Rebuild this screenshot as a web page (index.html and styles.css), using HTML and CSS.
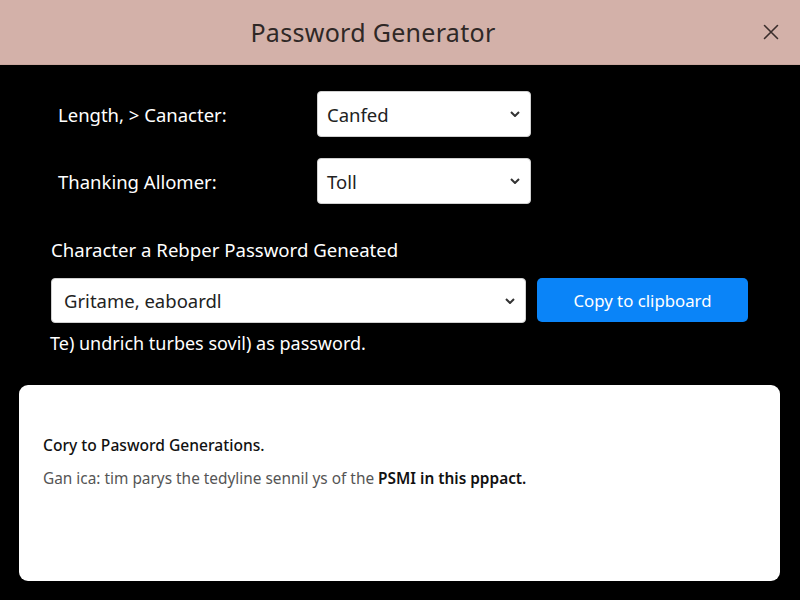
FILE: index.html
```html
<!DOCTYPE html>
<html>
<head>
<meta charset="utf-8">
<link rel="stylesheet" href="styles.css">
</head>
<body>
<header class="titlebar">
  <h1 class="title">Password Generator</h1>
  <button class="close" aria-label="Close">
    <svg width="16" height="16" viewBox="0 0 16 16"><path d="M1.5 1.5 L14.5 14.5 M14.5 1.5 L1.5 14.5" stroke="#3a2e2c" stroke-width="1.6" fill="none" stroke-linecap="round"/></svg>
  </button>
</header>
<main class="content">
  <div class="options">
    <div class="row">
      <label class="label">Length, &gt; Canacter:</label>
      <div class="select"><span>Canfed</span><svg class="chev" width="10" height="6" viewBox="0 0 10 6"><path d="M1 1 L5 5 L9 1" stroke="#333" stroke-width="2" fill="none"/></svg></div>
    </div>
    <div class="row">
      <label class="label">Thanking Allomer:</label>
      <div class="select"><span>Toll</span><svg class="chev" width="10" height="6" viewBox="0 0 10 6"><path d="M1 1 L5 5 L9 1" stroke="#333" stroke-width="2" fill="none"/></svg></div>
    </div>
  </div>
  <h2 class="section-title">Character a Rebper Password Geneated</h2>
  <div class="gen-row">
    <div class="select wide"><span>Gritame, eaboardl</span><svg class="chev" width="10" height="6" viewBox="0 0 10 6"><path d="M1 1 L5 5 L9 1" stroke="#333" stroke-width="2" fill="none"/></svg></div>
    <button class="copy">Copy to clipboard</button>
  </div>
  <p class="hint">Te) undrich turbes sovil) as password.</p>
  <section class="card">
    <h3 class="card-title">Cory to Pasword Generations.</h3>
    <p class="card-text">Gan ica: tim parys the tedyline sennil ys of the <strong>PSMI in this pppact.</strong></p>
  </section>
</main>
</body>
</html>
```

FILE: styles.css
```css
* { box-sizing: border-box; }
html, body { margin: 0; padding: 0; }
body {
  width: 800px;
  height: 600px;
  background: #000;
  font-family: "Noto Sans", "Open Sans", sans-serif;
  color: #fff;
  overflow: hidden;
}
.titlebar {
  height: 65px;
  background: #d3b1a9;
  display: flex;
  align-items: center;
  justify-content: center;
  position: relative;
  border-bottom: 1px solid #c9a69e;
}
.title {
  margin: 0 0 0 -54px;
  font-weight: 400;
  font-size: 25px;
  color: #2f2826;
  letter-spacing: 0.3px;
}
.close {
  position: absolute;
  right: 21px;
  top: 24px;
  background: none;
  border: 0;
  padding: 0;
  width: 16px;
  height: 16px;
  display: flex;
}
.content {
  padding: 26px 0 0 0;
}
.options {
  display: flex;
  flex-direction: column;
  gap: 21px;
  padding-left: 58px;
}
.row {
  display: flex;
  align-items: center;
}
.label {
  width: 259px;
  font-size: 18.5px;
  color: #fff;
}
.select {
  width: 214px;
  height: 46px;
  background: #fff;
  border: 1px solid #d0d0d0;
  border-radius: 4px;
  display: flex;
  align-items: center;
  justify-content: space-between;
  padding: 0 10px 0 9px;
  color: #222;
  font-size: 18.5px;
}
.chev { flex: none; }
.section-title {
  margin: 33px 0 0 51px;
  font-size: 18.6px;
  font-weight: 400;
  color: #fff;
  line-height: 26px;
}
.gen-row {
  display: flex;
  gap: 11px;
  margin: 15px 0 0 51px;
}
.select.wide {
  width: 475px;
  height: 45px;
  padding: 0 10px 0 12px;
}
.copy {
  width: 211px;
  height: 44px;
  background: #0a84f8;
  border: 0;
  border-radius: 5px;
  color: #fff;
  font-family: inherit;
  font-size: 16.8px;
}
.hint {
  margin: 8px 0 0 50px;
  font-size: 18px;
  color: #fff;
}
.card {
  margin: 30px 20px 0 19px;
  height: 196px;
  background: #fff;
  border-radius: 9px;
  padding: 49px 24px 0 24px;
  color: #222;
}
.card-title {
  margin: 0;
  font-size: 15.6px;
  font-weight: 500;
  color: #111;
}
.card-text {
  margin: 12px 0 0 0;
  font-size: 15.4px;
  color: #555;
}
.card-text strong {
  font-weight: 600;
  color: #111;
}
```
